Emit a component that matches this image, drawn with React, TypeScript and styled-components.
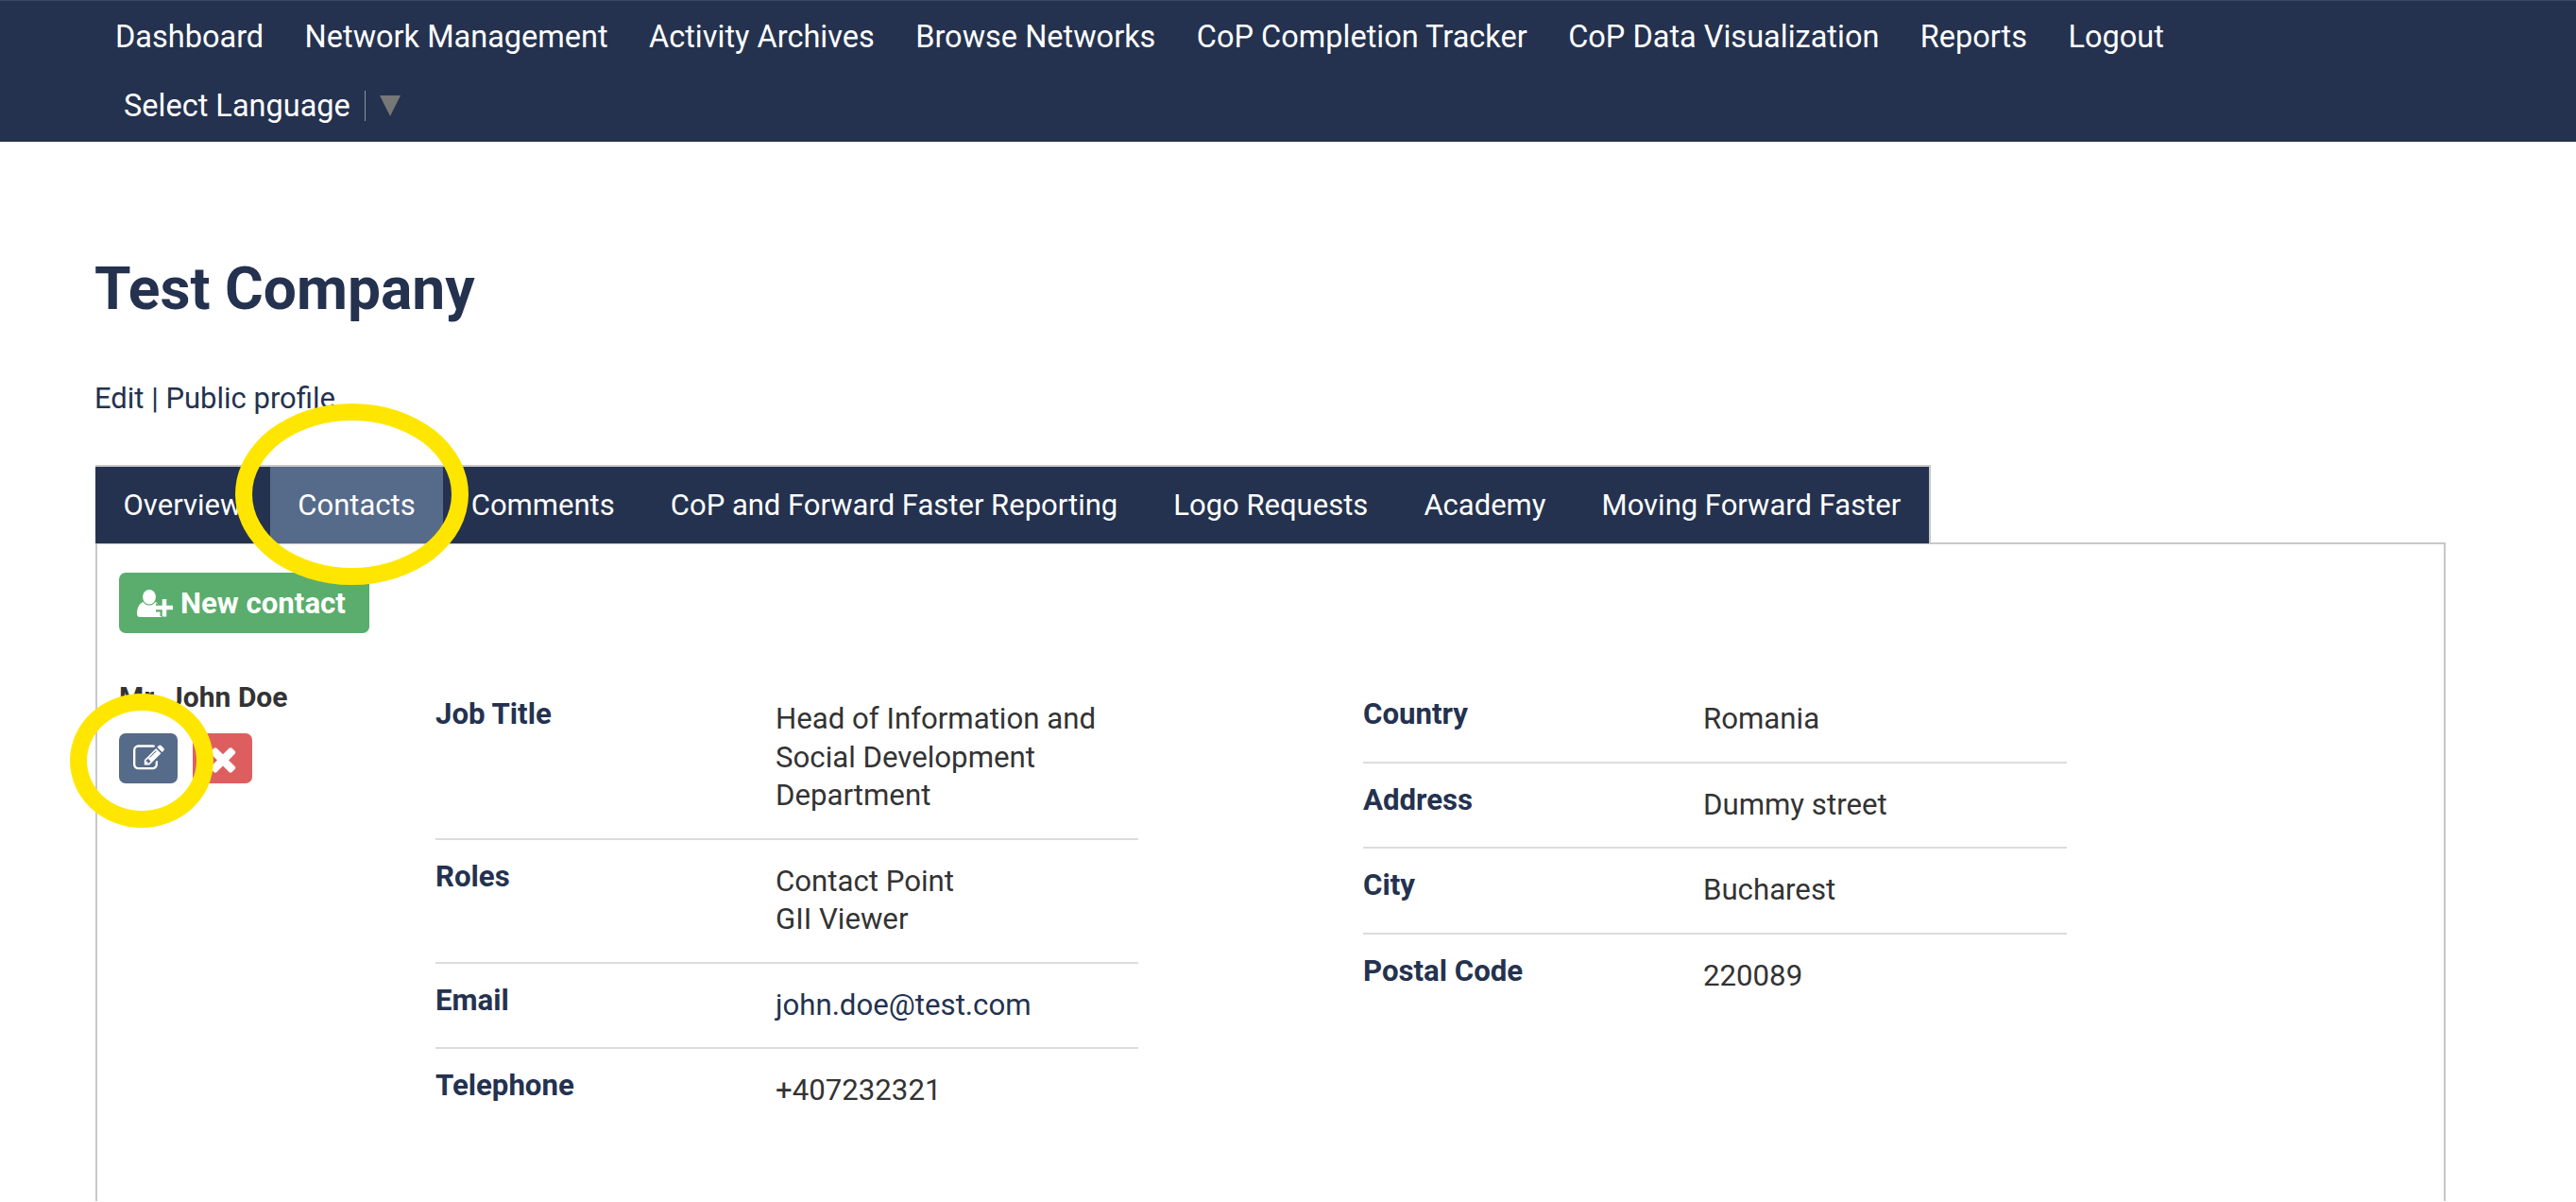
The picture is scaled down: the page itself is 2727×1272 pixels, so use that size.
import React from "react";
import styled, { createGlobalStyle } from "styled-components";

const NAVY = "#24324f";

const GlobalStyle = createGlobalStyle`
  html, body {
    margin: 0;
    padding: 0;
    background: #fff;
  }
  body {
    font-family: Roboto, "Liberation Sans", sans-serif;
    font-size: 31px;
    color: #333;
  }
`;

const mainLinks = [
  "Dashboard",
  "Network Management",
  "Activity Archives",
  "Browse Networks",
  "CoP Completion Tracker",
  "CoP Data Visualization",
  "Reports",
  "Logout",
];

const tabs = [
  "Overview",
  "Contacts",
  "Comments",
  "CoP and Forward Faster Reporting",
  "Logo Requests",
  "Academy",
  "Moving Forward Faster",
];

const jobRows = [
  { label: "Job Title", lines: ["Head of Information and", "Social Development", "Department"] },
  { label: "Roles", lines: ["Contact Point", "GII Viewer"] },
  { label: "Email", lines: ["john.doe@test.com"], link: true },
  { label: "Telephone", lines: ["+407232321"] },
];

const addressRows = [
  { label: "Country", lines: ["Romania"] },
  { label: "Address", lines: ["Dummy street"] },
  { label: "City", lines: ["Bucharest"] },
  { label: "Postal Code", lines: ["220089"] },
];

type Row = { label: string; lines: string[]; link?: boolean };

function UserPlusIcon() {
  return (
    <svg width="38" height="29" viewBox="0 0 38 29" aria-hidden="true">
      <ellipse cx="13" cy="7.7" rx="6.9" ry="7.7" fill="#fff" />
      <path
        d="M0 25.5C0 19 2.5 14.5 6.5 13c2 2.6 4 3.6 6.5 3.6s4.500-1 6.500-3.600c3.500 1.300 5.500 4 6.200 8.500V29H3c-2 0-3-1.500-3-3.500z"
        fill="#fff"
      />
      <path d="M29 10v18M20 19h18" stroke="#5aad6c" strokeWidth="9" />
      <path d="M29 10v18.500M20 19h18" stroke="#fff" strokeWidth="4.500" />
    </svg>
  );
}

function EditIcon() {
  return (
    <svg width="33" height="33" viewBox="0 0 1792 1792" fill="currentColor" aria-hidden="true">
      <path d="M888 1184l116-116-152-152-116 116v56h96v96h56zm440-720q-16-16-33 1l-350 350q-17 17-1 33t33-1l350-350q17-17 1-33zm80 594v190q0 119-84.500 203.500t-203.500 84.500h-832q-119 0-203.500-84.500t-84.500-203.500v-832q0-119 84.500-203.500t203.500-84.500h832q63 0 117 25 15 7 18 23 3 17-9 29l-49 49q-14 14-32 8-23-6-45-6h-832q-66 0-113 47t-47 113v832q0 66 47 113t113 47h832q66 0 113-47t47-113v-126q0-13 9-22l64-64q15-15 35-7t20 29zm-96-738l288 288-672 672h-288v-288zm444 132l-92 92-288-288 92-92q28-28 68-28t68 28l152 152q28 28 28 68t-28 68z" />
    </svg>
  );
}

function CloseIcon() {
  return (
    <svg width="40" height="40" viewBox="0 0 1792 1792" fill="currentColor" aria-hidden="true">
      <path d="M1490 1322q0 40-28 68l-136 136q-28 28-68 28t-68-28l-294-294-294 294q-28 28-68 28t-68-28l-136-136q-28-28-28-68t28-68l294-294-294-294q-28-28-28-68t28-68l136-136q28-28 68-28t68 28l294 294 294-294q28-28 68-28t68 28l136 136q28 28 28 68t-28 68l-294 294 294 294q28 28 28 68z" />
    </svg>
  );
}

function DetailTable({ rows }: { rows: Row[] }) {
  return (
    <Details>
      {rows.map((row) => (
        <DetailRow key={row.label}>
          <DetailLabel>{row.label}</DetailLabel>
          <DetailValue $link={row.link}>
            {row.lines.map((line) => (
              <div key={line}>{line}</div>
            ))}
          </DetailValue>
        </DetailRow>
      ))}
    </Details>
  );
}

export default function App() {
  return (
    <>
      <GlobalStyle />
      <TopBar>
        <MainLinks>
          {mainLinks.map((link) => (
            <MainLink key={link}>{link}</MainLink>
          ))}
        </MainLinks>
        <LanguageRow>
          <LanguageLabel>Select Language</LanguageLabel>
          <LanguageCaret />
        </LanguageRow>
      </TopBar>

      <Main>
        <Title>Test Company</Title>
        <SubLinks>Edit | Public profile</SubLinks>

        <TabBar>
          {tabs.map((tab) => (
            <Tab key={tab} $active={tab === "Contacts"}>
              {tab}
              {tab === "Contacts" ? <TabCircle /> : null}
            </Tab>
          ))}
        </TabBar>

        <Panel>
          <NewContact>
            <UserPlusIcon />
            New contact
          </NewContact>

          <ContactRow>
            <ContactHead>
              <ContactName>Mr. John Doe</ContactName>
              <ContactActions>
                <EditButton aria-label="Edit">
                  <EditIcon />
                  <EditCircle />
                </EditButton>
                <DeleteButton aria-label="Delete">
                  <CloseIcon />
                </DeleteButton>
              </ContactActions>
            </ContactHead>
            <DetailTable rows={jobRows} />
            <DetailTable rows={addressRows} />
          </ContactRow>
        </Panel>
      </Main>
    </>
  );
}

const TopBar = styled.header`
  height: 150px;
  box-sizing: border-box;
  background: ${NAVY};
  border-top: 1px solid #3d4963;
  color: #fff;
  font-size: 32.5px;
`;

const MainLinks = styled.nav`
  display: flex;
  gap: 43.4px;
  padding: 18px 0 0 122px;
  height: 56px;
  line-height: 40px;
`;

const MainLink = styled.a`
  white-space: nowrap;
`;

const LanguageRow = styled.div`
  display: flex;
  align-items: center;
  padding: 21px 0 0 131px;
  line-height: 40px;
`;

const LanguageLabel = styled.span`
  padding-right: 15px;
  border-right: 1px solid #8d94a3;
  line-height: 32px;
`;

const LanguageCaret = styled.span`
  width: 0;
  height: 0;
  margin-left: 15px;
  border-left: 11px solid transparent;
  border-right: 11px solid transparent;
  border-top: 22px solid #777;
`;

const Main = styled.main`
  padding: 0 138px 0 101px;
`;

const Title = styled.h1`
  margin: 0 0 0 -1px;
  padding-top: 120px;
  font-size: 62.3px;
  font-weight: 700;
  line-height: 72px;
  color: ${NAVY};
`;

const SubLinks = styled.div`
  margin: 60px 0 0 -1px;
  font-size: 31px;
  line-height: 40px;
  color: ${NAVY};
`;

const TabBar = styled.div`
  display: inline-flex;
  vertical-align: top;
  margin-top: 50px;
  border: solid #c8c8c8;
  border-width: 2px 2px 0 0;
  background: ${NAVY};
  height: 81px;
`;

const Tab = styled.div<{ $active?: boolean }>`
  position: relative;
  display: flex;
  align-items: center;
  padding: 0 29.55px;
  font-size: 31px;
  color: #fff;
  white-space: nowrap;
  background: ${(p) => (p.$active ? "#566a8a" : "transparent")};
`;

const TabCircle = styled.span`
  position: absolute;
  left: -37px;
  top: -67px;
  width: 247px;
  height: 192px;
  box-sizing: border-box;
  border: 18px solid #ffe600;
  border-radius: 50%;
  z-index: 2;
`;

const Panel = styled.section`
  box-sizing: border-box;
  height: 697px;
  margin-top: -1px;
  padding: 30px 23px 0;
  border: solid #c8c8c8;
  border-width: 2px 2px 0 2px;
`;

const NewContact = styled.button`
  display: flex;
  align-items: center;
  gap: 8px;
  height: 64px;
  padding: 0 25px 0 19px;
  border: 0;
  border-radius: 7px;
  background: #5aad6c;
  color: #fff;
  font: 700 31.2px Roboto, sans-serif;
`;

const ContactRow = styled.div`
  display: grid;
  grid-template-columns: 335px 744px 745px;
  margin-top: 45px;
`;

const ContactHead = styled.div`
  display: flex;
  flex-direction: column;
  padding-top: 3px;
`;

const ContactName = styled.div`
  font-size: 30px;
  font-weight: 700;
  line-height: 40px;
  color: #333;
`;

const ContactActions = styled.div`
  display: flex;
  gap: 16px;
  margin-top: 18px;
`;

const IconButton = styled.button`
  position: relative;
  display: flex;
  align-items: center;
  justify-content: center;
  width: 62px;
  height: 53px;
  padding: 0;
  border: 0;
  border-radius: 7px;
  color: #fff;
`;

const EditButton = styled(IconButton)`
  background: #566a8a;
`;

const DeleteButton = styled(IconButton)`
  background: #de5e60;
  width: 63px;
`;

const EditCircle = styled.span`
  position: absolute;
  left: -52px;
  top: -42px;
  width: 152px;
  height: 142px;
  box-sizing: border-box;
  border: 18px solid #ffe600;
  border-radius: 50%;
  z-index: 2;
`;

const Details = styled.div`
  display: flex;
  flex-direction: column;
  width: 100%;
  margin-top: 2px;
  &:last-child {
    margin-left: 238px;
    width: 745px;
  }
`;

const DetailRow = styled.div`
  display: grid;
  grid-template-columns: 360px 1fr;
  padding: 24px 0;
  border-bottom: 2px solid #dcdcdc;
  &:last-child {
    border-bottom: 0;
  }
`;

const DetailLabel = styled.div`
  margin-top: -5px;
  font-size: 31.2px;
  font-weight: 700;
  line-height: 40px;
  color: ${NAVY};
`;

const DetailValue = styled.div<{ $link?: boolean }>`
  font-size: 31.2px;
  line-height: 40.5px;
  color: ${(p) => (p.$link ? NAVY : "#333")};
`;
